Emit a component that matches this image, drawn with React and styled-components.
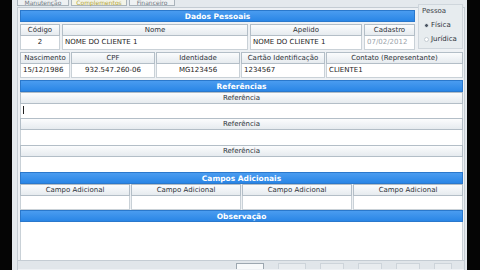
import styled, { createGlobalStyle } from "styled-components";

const GlobalStyle = createGlobalStyle`
  html, body {
    margin: 0;
    padding: 0;
    background: #000;
  }
  body {
    font-family: "DejaVu Sans", "Liberation Sans", sans-serif;
    font-size: 7px;
    color: #1c1c1c;
  }
`;

const Screen = styled.div`
  display: flex;
  width: 480px;
  height: 270px;
  overflow: hidden;
  background: #000;
`;

const Strip = styled.div`
  width: ${(p) => p.$w}px;
  flex-shrink: 0;
  background: #050505;
`;

const Window = styled.div`
  flex: 1;
  display: flex;
  flex-direction: column;
  background: #e4e9ed;
`;

const TabBar = styled.div`
  height: 6px;
  display: flex;
  align-items: flex-end;
  gap: 2px;
  padding-left: 5px;
`;

const Tab = styled.div`
  height: 6px;
  line-height: 6px;
  width: ${(p) => p.$w}px;
  text-align: center;
  border: 1px solid #a9b3bb;
  border-top: none;
  box-sizing: border-box;
  background: ${(p) => (p.$active ? "#f3f4e8" : "#eef1f3")};
  color: ${(p) => (p.$active ? "#b3a43a" : "#6f7880")};
  font-size: 6px;
  white-space: nowrap;
`;

const Frame = styled.div`
  flex: 1;
  margin: 1px 2px 0 5px;
  border: 1px solid #c4ccd3;
  border-bottom: none;
  background: #eef1f4;
  display: flex;
  flex-direction: column;
  padding: 1px 1px 0 2px;
`;

const TopSection = styled.div`
  display: flex;
  gap: 3px;
`;

const LeftCol = styled.div`
  width: 395px;
  display: flex;
  flex-direction: column;
  padding-top: 1px;
`;

const GroupBox = styled.div`
  flex: 1;
  margin-top: -5px;
  margin-bottom: 1px;
  border: 1px solid #cfd6dc;
  background: #e7ecef;
  padding: 2px 3px;
  display: flex;
  flex-direction: column;
  gap: 6px;
`;

const GroupTitle = styled.div`
  color: #3c4248;
  font-size: 7px;
`;

const RadioRow = styled.div`
  display: flex;
  align-items: center;
  gap: 2px;
  padding-left: 2px;
  color: #2c3238;
`;

const RadioDot = styled.span`
  width: 5px;
  height: 5px;
  border-radius: 50%;
  background: ${(p) => (p.$on ? "#4b5563" : "#fff")};
  border: 1px solid ${(p) => (p.$on ? "#e7ecef" : "#c4ccd3")};
  box-sizing: border-box;
`;

const SectionBar = styled.div`
  height: 12px;
  line-height: 12px;
  background: linear-gradient(#4a9cf0, #2a86e6);
  color: #fff;
  font-weight: bold;
  font-size: 7.5px;
  text-align: center;
  border: 1px solid #2a78cc;
  box-sizing: border-box;
`;

const Grid = styled.div`
  display: grid;
  grid-template-columns: ${(p) => p.$cols};
  column-gap: ${(p) => p.$gap ?? 2}px;
  margin-top: ${(p) => p.$mt || 0}px;
`;

const HeadCell = styled.div`
  height: 12px;
  line-height: 11px;
  box-sizing: border-box;
  border: 1px solid #b3bec7;
  background: linear-gradient(#fbfcfd, #e6ebef);
  text-align: center;
  color: #2c3238;
  white-space: nowrap;
  overflow: hidden;
`;

const DataCell = styled.div`
  height: 14px;
  line-height: 13px;
  box-sizing: border-box;
  border: 1px solid #c9d1d7;
  border-top: none;
  background: #fff;
  padding: 0 2px;
  text-align: ${(p) => p.$align || "left"};
  color: ${(p) => (p.$disabled ? "#9aa3aa" : "#1c1c1c")};
  white-space: nowrap;
  overflow: hidden;
`;

const TextArea = styled.div`
  height: ${(p) => p.$h}px;
  box-sizing: border-box;
  background: #fff;
  border-left: 1px solid #c9d1d7;
  border-right: 1px solid #c9d1d7;
  position: relative;
`;

const Caret = styled.span`
  position: absolute;
  left: 2px;
  top: 2px;
  width: 1px;
  height: 8px;
  background: #222;
`;

const Stack = styled.div`
  display: flex;
  flex-direction: column;
  margin-top: ${(p) => p.$mt || 0}px;
`;

const Footer = styled.div`
  height: 8px;
  margin: 0 -1px 0 -2px;
  border-top: 1px solid #c4ccd3;
  background: #e1e6ea;
  display: flex;
  align-items: flex-end;
  justify-content: flex-end;
  gap: 14px;
  padding-right: 12px;
`;

const FooterBtn = styled.div`
  width: ${(p) => p.$w}px;
  height: 5px;
  border: 1px solid ${(p) => (p.$strong ? "#9ca7b0" : "#cdd4da")};
  border-bottom: none;
  background: ${(p) => (p.$strong ? "#f7f9fa" : "#e8ecef")};
`;

export default function App() {
  return (
    <>
      <GlobalStyle />
      <Screen>
        <Strip $w={12} />
        <Window>
          <TabBar>
            <Tab $w={52}>Manutenção</Tab>
            <Tab $w={56} $active>Complementos</Tab>
            <Tab $w={46}>Financeiro</Tab>
          </TabBar>
          <Frame>
            <TopSection>
              <LeftCol>
                <SectionBar>Dados Pessoais</SectionBar>
                <Grid $cols="40px 186px 112px 51px" $mt={2}>
                  <HeadCell>Código</HeadCell>
                  <HeadCell>Nome</HeadCell>
                  <HeadCell>Apelido</HeadCell>
                  <HeadCell>Cadastro</HeadCell>
                  <DataCell $align="center">2</DataCell>
                  <DataCell>NOME DO CLIENTE 1</DataCell>
                  <DataCell>NOME DO CLIENTE 1</DataCell>
                  <DataCell $disabled>07/02/2012</DataCell>
                </Grid>
              </LeftCol>
              <GroupBox>
                <GroupTitle>Pessoa</GroupTitle>
                <RadioRow>
                  <RadioDot $on />
                  Física
                </RadioRow>
                <RadioRow>
                  <RadioDot />
                  Jurídica
                </RadioRow>
              </GroupBox>
            </TopSection>

            <Grid $cols="50px 84px 84px 84px 1fr" $gap={1} $mt={2}>
              <HeadCell>Nascimento</HeadCell>
              <HeadCell>CPF</HeadCell>
              <HeadCell>Identidade</HeadCell>
              <HeadCell>Cartão Identificação</HeadCell>
              <HeadCell>Contato (Representante)</HeadCell>
              <DataCell>15/12/1986</DataCell>
              <DataCell $align="center">932.547.260-06</DataCell>
              <DataCell $align="center">MG123456</DataCell>
              <DataCell>1234567</DataCell>
              <DataCell>CLIENTE1</DataCell>
            </Grid>

            <Stack $mt={2}>
              <SectionBar>Referências</SectionBar>
              <HeadCell>Referência</HeadCell>
              <TextArea $h={14}>
                <Caret />
              </TextArea>
              <HeadCell>Referência</HeadCell>
              <TextArea $h={15} />
              <HeadCell>Referência</HeadCell>
              <TextArea $h={15} />
            </Stack>

            <Stack>
              <SectionBar>Campos Adicionais</SectionBar>
              <Grid $cols="1fr 1fr 1fr 1fr" $gap={1}>
                <HeadCell>Campo Adicional</HeadCell>
                <HeadCell>Campo Adicional</HeadCell>
                <HeadCell>Campo Adicional</HeadCell>
                <HeadCell>Campo Adicional</HeadCell>
                <DataCell />
                <DataCell />
                <DataCell />
                <DataCell />
              </Grid>
            </Stack>

            <Stack>
              <SectionBar>Observação</SectionBar>
              <TextArea $h={38} />
            </Stack>

            <Footer>
              <FooterBtn $w={26} $strong />
              <FooterBtn $w={26} />
              <FooterBtn $w={22} />
              <FooterBtn $w={22} />
              <FooterBtn $w={22} />
              <FooterBtn $w={16} />
            </Footer>
          </Frame>
        </Window>
        <Strip $w={13} />
      </Screen>
    </>
  );
}
